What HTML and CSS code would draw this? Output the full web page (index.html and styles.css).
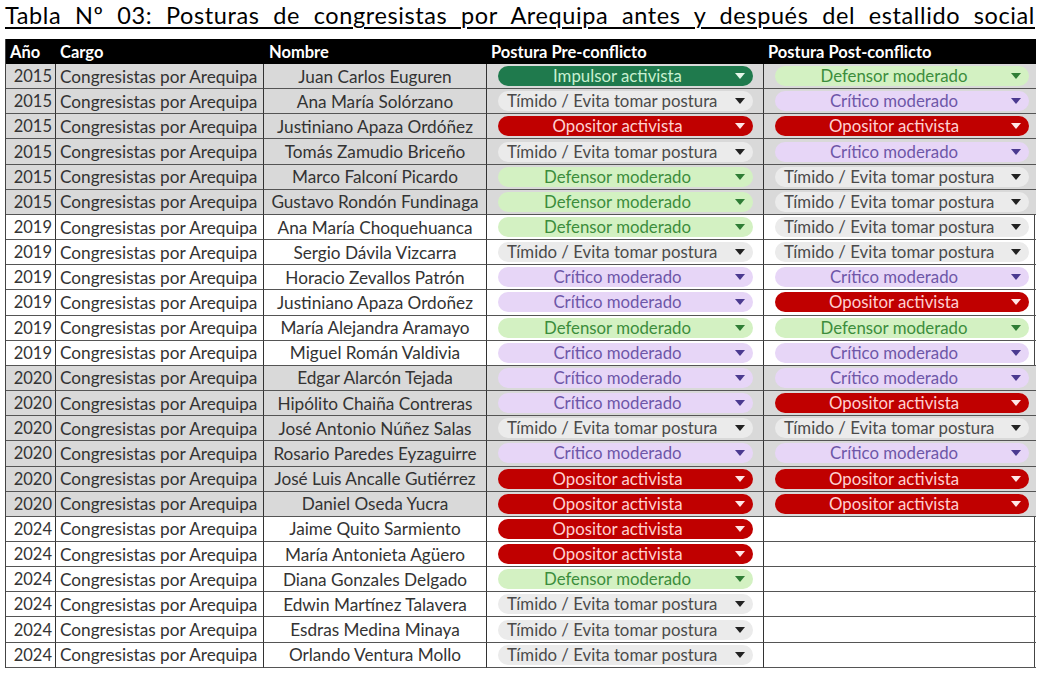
FILE: index.html
```
<!DOCTYPE html>
<html lang="es">
<head>
<meta charset="utf-8">
<link rel="stylesheet" href="styles.css">
</head>
<body>
<div class="page">
  <h1 class="title">Tabla Nº 03: Posturas de congresistas por Arequipa antes y después del estallido social</h1>
  <div class="grid">
    <div class="h">Año</div><div class="h">Cargo</div><div class="h c">Nombre</div><div class="h">Postura Pre-conflicto</div><div class="h">Postura Post-conflicto</div>

    <div class="y g">2015</div><div class="k g">Congresistas por Arequipa</div><div class="n g">Juan Carlos Euguren</div><div class="p g"><span class="pill imp">Impulsor activista</span></div><div class="p g"><span class="pill def">Defensor moderado</span></div>
    <div class="y g">2015</div><div class="k g">Congresistas por Arequipa</div><div class="n g">Ana María Solórzano</div><div class="p g"><span class="pill tim">Tímido / Evita tomar postura</span></div><div class="p g"><span class="pill cri">Crítico moderado</span></div>
    <div class="y g">2015</div><div class="k g">Congresistas por Arequipa</div><div class="n g">Justiniano Apaza Ordóñez</div><div class="p g"><span class="pill opo">Opositor activista</span></div><div class="p g"><span class="pill opo">Opositor activista</span></div>
    <div class="y g">2015</div><div class="k g">Congresistas por Arequipa</div><div class="n g">Tomás Zamudio Briceño</div><div class="p g"><span class="pill tim">Tímido / Evita tomar postura</span></div><div class="p g"><span class="pill cri">Crítico moderado</span></div>
    <div class="y g">2015</div><div class="k g">Congresistas por Arequipa</div><div class="n g">Marco Falconí Picardo</div><div class="p g"><span class="pill def">Defensor moderado</span></div><div class="p g"><span class="pill tim">Tímido / Evita tomar postura</span></div>
    <div class="y g">2015</div><div class="k g">Congresistas por Arequipa</div><div class="n g">Gustavo Rondón Fundinaga</div><div class="p g"><span class="pill def">Defensor moderado</span></div><div class="p g"><span class="pill tim">Tímido / Evita tomar postura</span></div>

    <div class="y">2019</div><div class="k">Congresistas por Arequipa</div><div class="n">Ana María Choquehuanca</div><div class="p"><span class="pill def">Defensor moderado</span></div><div class="p"><span class="pill tim">Tímido / Evita tomar postura</span></div>
    <div class="y">2019</div><div class="k">Congresistas por Arequipa</div><div class="n">Sergio Dávila Vizcarra</div><div class="p"><span class="pill tim">Tímido / Evita tomar postura</span></div><div class="p"><span class="pill tim">Tímido / Evita tomar postura</span></div>
    <div class="y">2019</div><div class="k">Congresistas por Arequipa</div><div class="n">Horacio Zevallos Patrón</div><div class="p"><span class="pill cri">Crítico moderado</span></div><div class="p"><span class="pill cri">Crítico moderado</span></div>
    <div class="y">2019</div><div class="k">Congresistas por Arequipa</div><div class="n">Justiniano Apaza Ordoñez</div><div class="p"><span class="pill cri">Crítico moderado</span></div><div class="p"><span class="pill opo">Opositor activista</span></div>
    <div class="y">2019</div><div class="k">Congresistas por Arequipa</div><div class="n">María Alejandra Aramayo</div><div class="p"><span class="pill def">Defensor moderado</span></div><div class="p"><span class="pill def">Defensor moderado</span></div>
    <div class="y">2019</div><div class="k">Congresistas por Arequipa</div><div class="n">Miguel Román Valdivia</div><div class="p"><span class="pill cri">Crítico moderado</span></div><div class="p"><span class="pill cri">Crítico moderado</span></div>

    <div class="y g">2020</div><div class="k g">Congresistas por Arequipa</div><div class="n g">Edgar Alarcón Tejada</div><div class="p g"><span class="pill cri">Crítico moderado</span></div><div class="p g"><span class="pill cri">Crítico moderado</span></div>
    <div class="y g">2020</div><div class="k g">Congresistas por Arequipa</div><div class="n g">Hipólito Chaiña Contreras</div><div class="p g"><span class="pill cri">Crítico moderado</span></div><div class="p g"><span class="pill opo">Opositor activista</span></div>
    <div class="y g">2020</div><div class="k g">Congresistas por Arequipa</div><div class="n g">José Antonio Núñez Salas</div><div class="p g"><span class="pill tim">Tímido / Evita tomar postura</span></div><div class="p g"><span class="pill tim">Tímido / Evita tomar postura</span></div>
    <div class="y g">2020</div><div class="k g">Congresistas por Arequipa</div><div class="n g">Rosario Paredes Eyzaguirre</div><div class="p g"><span class="pill cri">Crítico moderado</span></div><div class="p g"><span class="pill cri">Crítico moderado</span></div>
    <div class="y g">2020</div><div class="k g">Congresistas por Arequipa</div><div class="n g">José Luis Ancalle Gutiérrez</div><div class="p g"><span class="pill opo">Opositor activista</span></div><div class="p g"><span class="pill opo">Opositor activista</span></div>
    <div class="y g">2020</div><div class="k g">Congresistas por Arequipa</div><div class="n g">Daniel Oseda Yucra</div><div class="p g"><span class="pill opo">Opositor activista</span></div><div class="p g"><span class="pill opo">Opositor activista</span></div>

    <div class="y">2024</div><div class="k">Congresistas por Arequipa</div><div class="n">Jaime Quito Sarmiento</div><div class="p"><span class="pill opo">Opositor activista</span></div><div class="p"></div>
    <div class="y">2024</div><div class="k">Congresistas por Arequipa</div><div class="n">María Antonieta Agüero</div><div class="p"><span class="pill opo">Opositor activista</span></div><div class="p"></div>
    <div class="y">2024</div><div class="k">Congresistas por Arequipa</div><div class="n">Diana Gonzales Delgado</div><div class="p"><span class="pill def">Defensor moderado</span></div><div class="p"></div>
    <div class="y">2024</div><div class="k">Congresistas por Arequipa</div><div class="n">Edwin Martínez Talavera</div><div class="p"><span class="pill tim">Tímido / Evita tomar postura</span></div><div class="p"></div>
    <div class="y">2024</div><div class="k">Congresistas por Arequipa</div><div class="n">Esdras Medina Minaya</div><div class="p"><span class="pill tim">Tímido / Evita tomar postura</span></div><div class="p"></div>
    <div class="y">2024</div><div class="k">Congresistas por Arequipa</div><div class="n">Orlando Ventura Mollo</div><div class="p"><span class="pill tim">Tímido / Evita tomar postura</span></div><div class="p"></div>
  </div>
</div>
</body>
</html>
```
FILE: styles.css
```
* { box-sizing: border-box; }
html, body { margin: 0; padding: 0; background: #fff; }
body {
  font-family: Lato, "Open Sans", "Liberation Sans", sans-serif;
  color: #222;
  overflow: hidden;
  height: 673px;
}
.page { padding: 0 5px 0 5px; }
.title {
  margin: 0;
  font-weight: normal;
  font-size: 23.5px;
  letter-spacing: 0.6px;
  line-height: 28px;
  color: #000;
  text-decoration: underline;
  text-decoration-thickness: 1.5px;
  text-underline-offset: 3px;
  text-align: justify;
  text-align-last: justify;
  height: 39px;
  padding-top: 1px;
  white-space: nowrap;
  overflow: visible;
}
.grid {
  display: grid;
  grid-template-columns: 50px 208px 223px 277px 272px;
  grid-template-rows: 25px;
  grid-auto-rows: 25.17px;
  border-left: 1px solid #444;
  border-right: 1px solid #444;
  font-size: 17px;
}
.grid > div {
  display: flex;
  align-items: center;
  border-bottom: 1px solid #555;
  border-right: 1px solid #333;
  white-space: nowrap;
  overflow: hidden;
  min-width: 0;
}
.grid > div:nth-child(5n) { border-right: none; }
.h {
  background: #000;
  color: #fff;
  font-weight: bold;
  font-size: 16.5px;
  padding-left: 4px;
  border-right: none !important;
  border-bottom: none !important;
}
.h.c { padding-left: 5px; }
.g { background: #d9d9d9; }
.y { justify-content: flex-end; padding-right: 3px; color: #333; font-size: 16.5px; }
.k { padding-left: 4px; color: #333; font-size: 17.2px; }
.n { justify-content: center; color: #333; font-size: 17.2px; }
.p { padding: 0 10px 0 11px; }
.grid > .p:nth-child(5n) { padding: 0 7px 0 11px; }
.pill {
  position: relative;
  display: block;
  width: 100%;
  height: 20px;
  line-height: 20px;
  border-radius: 10px;
  text-align: center;
  font-size: 16.8px;
  padding-right: 20px;
  padding-left: 4px;
}
.pill::after {
  content: "";
  position: absolute;
  right: 8px;
  top: 7px;
  border-left: 5px solid transparent;
  border-right: 5px solid transparent;
  border-top: 6px solid currentColor;
}
.imp { background: #1f7a4d; color: #c8f0d0; }
.imp::after { border-top-color: #e6f7ea; }
.def { background: #d3f1c2; color: #3c8d3c; }
.def::after { border-top-color: #2f7d35; }
.tim { background: #ebebeb; color: #4a4a4a; text-align: left; padding-left: 9px; }
.tim::after { border-top-color: #222; }
.cri { background: #e7d6f7; color: #6e56a8; }
.cri::after { border-top-color: #4b3a90; }
.opo { background: #c00000; color: #ffd0d0; }
.opo::after { border-top-color: #ffe6e6; }
```
